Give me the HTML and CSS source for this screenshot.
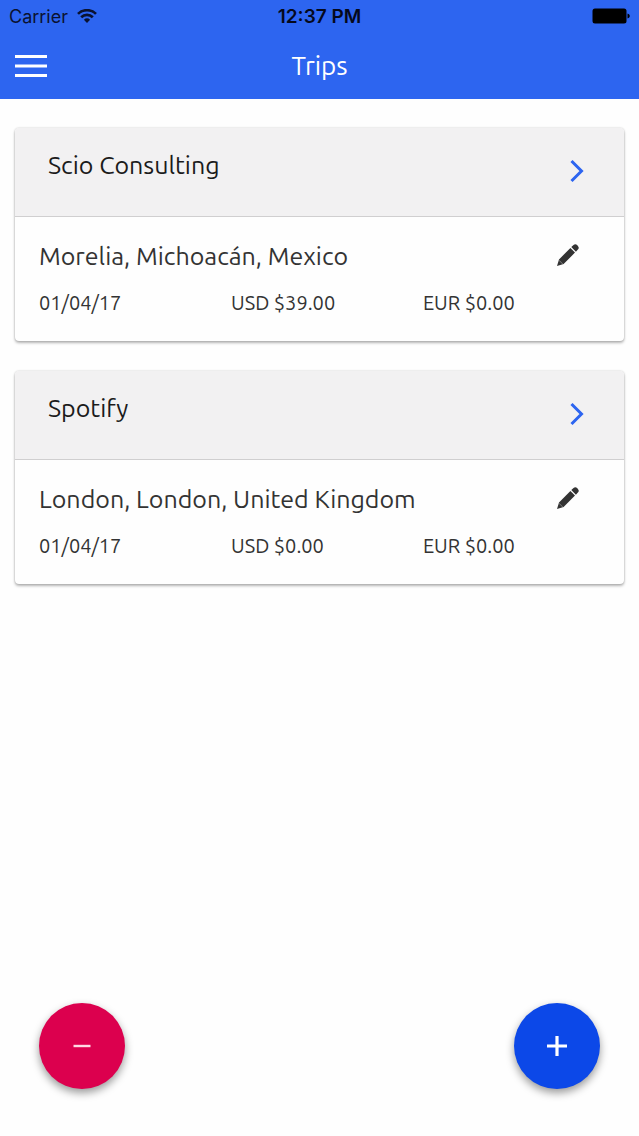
FILE: index.html
```html
<!DOCTYPE html>
<html lang="en">
<head>
<meta charset="utf-8">
<meta name="viewport" content="width=device-width, initial-scale=1">
<title>Trips</title>
<link rel="stylesheet" href="styles.css">
</head>
<body class="app">
<header class="topbar">
  <div class="status">
    <div class="status-left">
      <span>Carrier</span>
      <svg class="wifi" viewBox="0 0 20 14" aria-hidden="true">
        <path d="M1 4.900a12.800 12.800 0 0 1 18 0M4.200 8.300a8.300 8.300 0 0 1 11.600 0" fill="none" stroke="currentColor" stroke-width="2.700"/>
        <path d="M6.900 10.700a4.500 4.500 0 0 1 6.200 0L10 14z" fill="currentColor"/>
      </svg>
    </div>
    <span class="status-time">12:37 PM</span>
    <div class="status-right">
      <svg class="battery" viewBox="0 0 38 16" aria-hidden="true">
        <rect x="0.5" y="0.5" width="34" height="15" rx="2.5" fill="#000"/>
        <path d="M35.500 5.500c3 .7 3 4.300 0 5z" fill="#000"/>
      </svg>
    </div>
  </div>
  <div class="navbar">
    <button class="menu" type="button" aria-label="Menu">
      <svg class="menu-icon" viewBox="0 0 32 24" aria-hidden="true"><path d="M0 2.500h32M0 12h32M0 21.500h32" stroke="#fff" stroke-width="3"/></svg>
    </button>
    <h1 class="title">Trips</h1>
  </div>
</header>
<main class="trips">
  <article class="card">
    <a class="card-head" href="#scio">
      <h2 class="client">Scio Consulting</h2>
      <svg class="chevron" viewBox="0 0 14 24" aria-hidden="true"><path d="M1.500 2 11.500 12 1.500 22" fill="none" stroke="#2d65f0" stroke-width="3"/></svg>
    </a>
    <div class="card-body">
      <div class="place-row">
        <h3 class="place">Morelia, Michoacán, Mexico</h3>
        <button class="edit" type="button" aria-label="Edit Scio Consulting trip">
          <svg class="pencil" viewBox="0 0 22 22" aria-hidden="true"><path d="M0 22 2 15.400 13.400 4 18 8.600 6.600 20zM14.300 3.100 16.500 1.100Q18.300-.6 20.100 1.100L20.900 1.900Q22.600 3.700 20.900 5.500L18.900 7.700z" fill="#333"/><path d="M1.900 16.200 5.800 20.100" stroke="#bbb" stroke-width=".6"/></svg>
        </button>
      </div>
      <div class="figures"><time datetime="2017-01-04">01/04/17</time><span>USD $39.00</span><span>EUR $0.00</span></div>
    </div>
  </article>
  <article class="card">
    <a class="card-head" href="#spotify">
      <h2 class="client">Spotify</h2>
      <svg class="chevron" viewBox="0 0 14 24" aria-hidden="true"><path d="M1.500 2 11.500 12 1.500 22" fill="none" stroke="#2d65f0" stroke-width="3"/></svg>
    </a>
    <div class="card-body">
      <div class="place-row">
        <h3 class="place">London, London, United Kingdom</h3>
        <button class="edit" type="button" aria-label="Edit Spotify trip">
          <svg class="pencil" viewBox="0 0 22 22" aria-hidden="true"><path d="M0 22 2 15.400 13.400 4 18 8.600 6.600 20zM14.300 3.100 16.500 1.100Q18.300-.6 20.100 1.100L20.900 1.900Q22.600 3.700 20.900 5.500L18.900 7.700z" fill="#333"/><path d="M1.900 16.200 5.800 20.100" stroke="#bbb" stroke-width=".6"/></svg>
        </button>
      </div>
      <div class="figures"><time datetime="2017-01-04">01/04/17</time><span>USD $0.00</span><span>EUR $0.00</span></div>
    </div>
  </article>
</main>
<footer class="actions">
  <button class="fab fab-remove" type="button" aria-label="Remove trip">
    <svg class="fab-icon" viewBox="0 0 20 20" aria-hidden="true"><path d="M1.500 10h17" stroke="#ffd9e4" stroke-width="2.400"/></svg>
  </button>
  <button class="fab fab-add" type="button" aria-label="Add trip">
    <svg class="fab-icon" viewBox="0 0 20 20" aria-hidden="true"><path d="M0 10h20M10 0v20" stroke="#fff" stroke-width="3.200"/></svg>
  </button>
</footer>
</body>
</html>
```
FILE: styles.css
```css
* { box-sizing: border-box; }

.app {
  margin: 0;
  min-height: 100vh;
  display: flex;
  flex-direction: column;
  background: #fefefe;
  color: #333;
  font-family: Ubuntu, "Noto Sans", sans-serif;
}

h1, h2, h3 { margin: 0; font-weight: 400; }

button { padding: 0; border: 0; background: none; cursor: pointer; }

svg { display: block; }

.topbar { background: #2d65f0; }

.status {
  display: grid;
  grid-template-columns: 1fr auto 1fr;
  align-items: center;
  height: 32px;
  padding: 0 9px;
  color: #0a1230;
  font-family: Inter, sans-serif;
  font-size: 18px;
}

.status-left { display: flex; align-items: center; gap: 9px; }
.status-right { display: flex; justify-content: flex-end; }
.status-time { color: #05091c; font-size: 19px; font-weight: 600; }
.wifi { width: 20px; height: 14px; }
.battery { width: 38px; height: 16px; }

.navbar {
  display: grid;
  grid-template-columns: 1fr auto 1fr;
  align-items: center;
  height: 67px;
  padding: 0 15px;
}

.menu { justify-self: start; }
.menu-icon { width: 32px; height: 24px; }
.title { color: #fff; font-size: 26px; line-height: 32px; }

.trips {
  flex: 1;
  display: flex;
  flex-direction: column;
  gap: 30px;
  padding: 29px 15px;
}

.card {
  overflow: hidden;
  border-radius: 4px;
  background: #fefefe;
  box-shadow: 0 2px 3px rgba(0, 0, 0, .28), 0 0 2px rgba(0, 0, 0, .22);
}

.card-head {
  display: flex;
  justify-content: space-between;
  align-items: flex-start;
  height: 89px;
  padding: 21px 40px 0 33px;
  border-bottom: 1px solid #d0cfd0;
  background: #f2f1f2;
  color: #1b1b1b;
  text-decoration: none;
}

.client { font-size: 25px; line-height: 32px; }
.chevron { width: 14px; height: 24px; margin-top: 10px; }

.card-body { padding: 23px 9px 24px 24px; }

.place-row {
  display: flex;
  justify-content: space-between;
  align-items: flex-start;
  padding-right: 36px;
}

.place { font-size: 25px; line-height: 32px; }
.edit { padding-top: 4px; }
.pencil { width: 22px; height: 22px; }

.figures {
  display: grid;
  grid-template-columns: repeat(3, 1fr);
  padding-top: 17px;
  font-size: 20px;
  line-height: 28px;
}

.actions {
  display: flex;
  justify-content: space-between;
  padding: 0 39px 47px;
}

.fab {
  display: grid;
  place-items: center;
  width: 86px;
  height: 86px;
  border-radius: 50%;
  box-shadow: 0 4px 8px rgba(0, 0, 0, .4);
}

.fab-remove { background: #dc004e; }
.fab-add { background: #0c48e8; }
.fab-icon { width: 20px; height: 20px; }
```
